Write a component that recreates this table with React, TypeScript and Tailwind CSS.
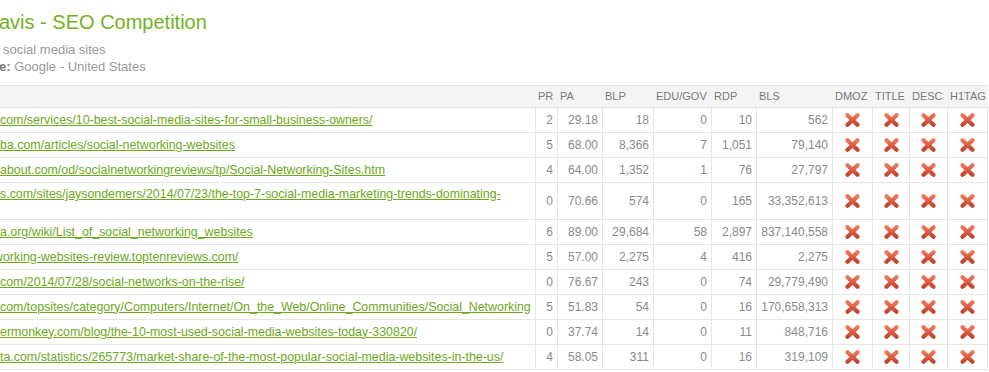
import React from "react";

type Row = {
  url: string;
  pr: string;
  pa: string;
  blp: string;
  edu: string;
  rdp: string;
  bls: string;
  tall?: boolean;
  shift?: boolean;
};

const rows: Row[] = [
  { url: "com/services/10-best-social-media-sites-for-small-business-owners/", pr: "2", pa: "29.18", blp: "18", edu: "0", rdp: "10", bls: "562" },
  { url: "ba.com/articles/social-networking-websites", pr: "5", pa: "68.00", blp: "8,366", edu: "7", rdp: "1,051", bls: "79,140" },
  { url: "about.com/od/socialnetworkingreviews/tp/Social-Networking-Sites.htm", pr: "4", pa: "64.00", blp: "1,352", edu: "1", rdp: "76", bls: "27,797" },
  { url: "s.com/sites/jaysondemers/2014/07/23/the-top-7-social-media-marketing-trends-dominating-", pr: "0", pa: "70.66", blp: "574", edu: "0", rdp: "165", bls: "33,352,613", tall: true },
  { url: "a.org/wiki/List_of_social_networking_websites", pr: "6", pa: "89.00", blp: "29,684", edu: "58", rdp: "2,897", bls: "837,140,558" },
  { url: "working-websites-review.toptenreviews.com/", pr: "5", pa: "57.00", blp: "2,275", edu: "4", rdp: "416", bls: "2,275", shift: true },
  { url: "com/2014/07/28/social-networks-on-the-rise/", pr: "0", pa: "76.67", blp: "243", edu: "0", rdp: "74", bls: "29,779,490" },
  { url: "com/topsites/category/Computers/Internet/On_the_Web/Online_Communities/Social_Networking", pr: "5", pa: "51.83", blp: "54", edu: "0", rdp: "16", bls: "170,658,313" },
  { url: "ermonkey.com/blog/the-10-most-used-social-media-websites-today-330820/", pr: "0", pa: "37.74", blp: "14", edu: "0", rdp: "11", bls: "848,716" },
  { url: "ta.com/statistics/265773/market-share-of-the-most-popular-social-media-websites-in-the-us/", pr: "4", pa: "58.05", blp: "311", edu: "0", rdp: "16", bls: "319,109" },
];

// widths include the 1px right border of each cell
const cols = [
  { key: "url", label: "", w: "w-[536px]" },
  { key: "pr", label: "PR", w: "w-[22px]" },
  { key: "pa", label: "PA", w: "w-[45px]" },
  { key: "blp", label: "BLP", w: "w-[51px]" },
  { key: "edu", label: "EDU/GOV", w: "w-[58px]" },
  { key: "rdp", label: "RDP", w: "w-[45px]" },
  { key: "bls", label: "BLS", w: "w-[76px]" },
  { key: "dmoz", label: "DMOZ", w: "w-[40px]" },
  { key: "title", label: "TITLE", w: "w-[37px]" },
  { key: "desc", label: "DESC", w: "w-[38px]" },
  { key: "h1", label: "H1TAG", w: "w-[40px]" },
];

const Cross: React.FC = () => (
  <svg width="17" height="16" viewBox="0 0 17 16">
    <defs>
      <linearGradient id="xg" x1="0" y1="0" x2="0" y2="1">
        <stop offset="0" stopColor="#ef7658" />
        <stop offset="1" stopColor="#c4442d" />
      </linearGradient>
    </defs>
    <path
      d="M3.5 3.2 L13.5 12.8 M13.5 3.2 L3.5 12.8"
      stroke="url(#xg)"
      strokeWidth="4.3"
      strokeLinecap="round"
      fill="none"
    />
  </svg>
);

const NumCell: React.FC<{ w: string; v: string }> = ({ w, v }) => (
  <div className={`${w} shrink-0 border-r border-[#e6e6e6] flex items-center justify-end pr-[4px]`}>{v}</div>
);

const XCell: React.FC<{ w: string }> = ({ w }) => (
  <div className={`${w} shrink-0 border-r border-[#e6e6e6] flex items-center justify-center`}>
    <Cross />
  </div>
);

const App: React.FC = () => {
  return (
    <div className="w-[989px] h-[372px] overflow-hidden bg-white font-['Liberation_Sans',Arial,sans-serif]">
      <div className="h-[85px] pt-[10px]">
        <div className="text-[20px] leading-[24px] text-[#72b31c] -ml-[1px] whitespace-nowrap">avis - SEO Competition</div>
        <div className="mt-[7px] text-[13px] leading-[17px] text-[#9a9a9a] whitespace-nowrap">
          <div className="pl-[3px]">social media sites</div>
          <div className="-ml-[1px]">
            <span className="font-bold text-[#7a7a7a]">e:</span> Google - United States
          </div>
        </div>
      </div>

      <div className="w-[988px] flex h-[23px] bg-[#f4f4f4] border-y border-[#e2e2e2] text-[11px] text-[#7a7a7a]">
        {cols.map((c) => (
          <div key={c.key} className={`${c.w} shrink-0 flex items-center pl-[2px] whitespace-nowrap`}>
            {c.label}
          </div>
        ))}
      </div>

      {rows.map((r, i) => (
        <div
          key={i}
          className={`w-[988px] flex border-b border-[#e6e6e6] text-[12px] text-[#8a8a8a] ${r.tall ? "h-[37px]" : "h-[25px]"}`}
        >
          <div className="w-[536px] shrink-0 border-r border-[#e6e6e6] flex items-center overflow-hidden">
            <div className={`leading-[13px] whitespace-nowrap text-[12.4px] ${r.shift ? "-ml-[6px]" : ""}`}>
              <a href="#" className="text-[#6ea820] underline decoration-[#6ea820]">
                {r.url}
              </a>
              {r.tall && <div className="h-[13px]" />}
            </div>
          </div>
          <NumCell w="w-[22px]" v={r.pr} />
          <NumCell w="w-[45px]" v={r.pa} />
          <NumCell w="w-[51px]" v={r.blp} />
          <NumCell w="w-[58px]" v={r.edu} />
          <NumCell w="w-[45px]" v={r.rdp} />
          <NumCell w="w-[76px]" v={r.bls} />
          <XCell w="w-[40px]" />
          <XCell w="w-[37px]" />
          <XCell w="w-[38px]" />
          <XCell w="w-[40px]" />
        </div>
      ))}
    </div>
  );
};

export default App;
